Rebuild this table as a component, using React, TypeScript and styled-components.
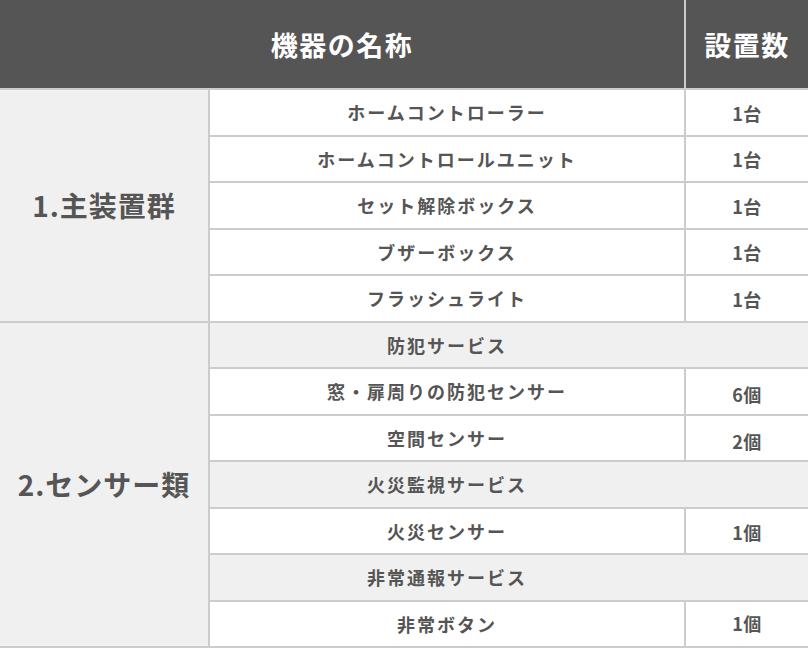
import React from 'react';
import styled, { createGlobalStyle } from 'styled-components';

const GlobalStyle = createGlobalStyle`
  * { box-sizing: border-box; }
  body {
    margin: 0;
    background: #fff;
    font-family: 'Noto Sans CJK JP', 'Noto Sans', sans-serif;
  }
`;

type Item = { name: string; count?: string; section?: boolean; drop?: number };
type Group = { label: string; items: Item[] };

const groups: Group[] = [
  {
    label: '1.主装置群',
    items: [
      { name: 'ホームコントローラー', count: '1台' },
      { name: 'ホームコントロールユニット', count: '1台' },
      { name: 'セット解除ボックス', count: '1台' },
      { name: 'ブザーボックス', count: '1台' },
      { name: 'フラッシュライト', count: '1台' },
    ],
  },
  {
    label: '2.センサー類',
    items: [
      { name: '防犯サービス', section: true },
      { name: '窓・扉周りの防犯センサー', count: '6個', drop: 6 },
      { name: '空間センサー', count: '2個', drop: 6 },
      { name: '火災監視サービス', section: true },
      { name: '火災センサー', count: '1個', drop: 3 },
      { name: '非常通報サービス', section: true },
      { name: '非常ボタン', count: '1個', drop: -2 },
    ],
  },
];

export default function App() {
  return (
    <>
      <GlobalStyle />
      <Table>
        <HeadRow>
          <HeadName>機器の名称</HeadName>
          <HeadCount>設置数</HeadCount>
        </HeadRow>
        {groups.map((g) => (
          <GroupRow key={g.label}>
            <GroupLabel>{g.label}</GroupLabel>
            <Items>
              {g.items.map((it) =>
                it.section ? (
                  <SectionRow key={it.name}>
                    <SectionName>{it.name}</SectionName>
                  </SectionRow>
                ) : (
                  <ItemRow key={it.name}>
                    <ItemName>{it.name}</ItemName>
                    <ItemCount $drop={it.drop ?? 1}>{it.count}</ItemCount>
                  </ItemRow>
                )
              )}
            </Items>
          </GroupRow>
        ))}
      </Table>
    </>
  );
}

const Table = styled.div`
  width: 808px;
  color: #555;
  font-weight: bold;
`;

const HeadRow = styled.div`
  display: flex;
  height: 90px;
  background: #555;
  border-bottom: 2px solid #ccc;
  color: #fff;
  font-size: 27px;
  letter-spacing: 1.5px;
`;

const HeadName = styled.div`
  width: 686px;
  border-right: 2px solid #ccc;
  display: flex;
  align-items: center;
  justify-content: center;
`;

const HeadCount = styled.div`
  flex: 1;
  display: flex;
  align-items: center;
  justify-content: center;
`;

const GroupRow = styled.div`
  display: flex;
`;

const GroupLabel = styled.div`
  width: 210px;
  background: #f0f0f0;
  border-right: 2px solid #ccc;
  border-bottom: 2px solid #ccc;
  display: flex;
  align-items: center;
  justify-content: center;
  font-size: 28px;
  letter-spacing: 1px;
`;

const Items = styled.div`
  flex: 1;
  display: flex;
  flex-direction: column;
`;

const ItemRow = styled.div`
  display: flex;
  height: 46.5px;
  border-bottom: 2px solid #ccc;
  background: #fff;
  font-size: 18px;
  letter-spacing: 2px;
`;

const ItemName = styled.div`
  width: 476px;
  border-right: 2px solid #ccc;
  display: flex;
  align-items: center;
  justify-content: center;
`;

const ItemCount = styled.div<{ $drop: number }>`
  flex: 1;
  display: flex;
  align-items: center;
  justify-content: center;
  padding-top: ${(p) => Math.max(p.$drop, 0)}px;
  padding-bottom: ${(p) => Math.max(-p.$drop, 0)}px;
  letter-spacing: 0.5px;
`;

const SectionRow = styled.div`
  display: flex;
  height: 46.5px;
  border-bottom: 2px solid #ccc;
  background: #f0f0f0;
  font-size: 18px;
  letter-spacing: 2px;
`;

const SectionName = styled.div`
  width: 474px;
  display: flex;
  align-items: center;
  justify-content: center;
`;
